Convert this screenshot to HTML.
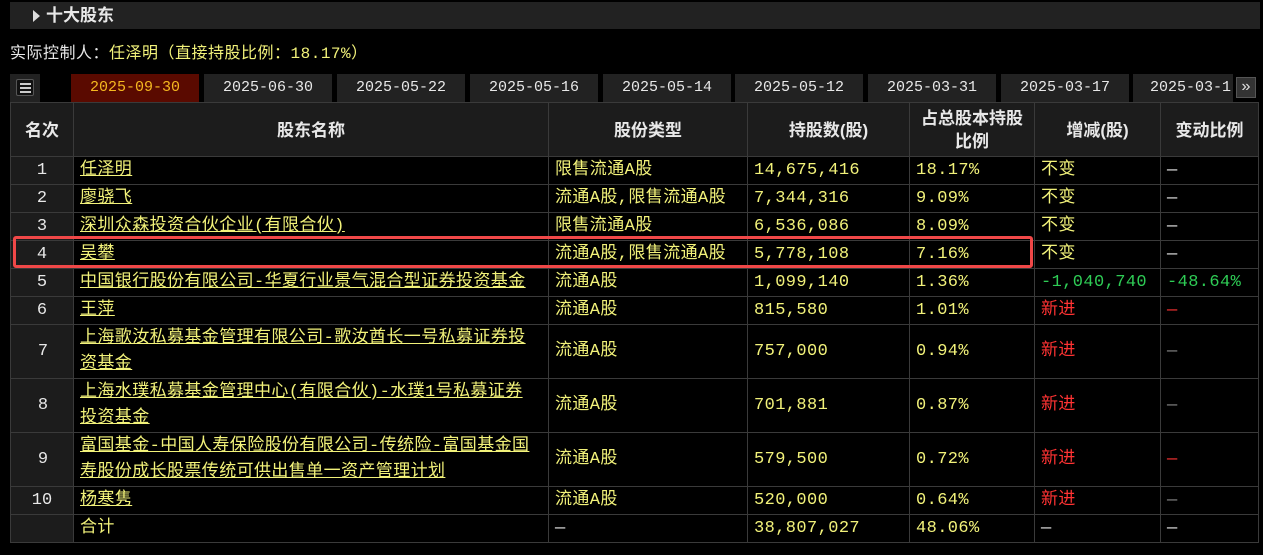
<!DOCTYPE html>
<html><head><meta charset="utf-8"><style>
*{margin:0;padding:0;box-sizing:border-box}
body{width:1263px;height:555px;background:#000;font-family:"Liberation Mono","Noto Sans CJK SC",monospace;font-size:15px;color:#e8e8e8;position:relative;overflow:hidden}
.hdr{position:absolute;left:10px;top:2px;width:1250px;height:27px;background:#222;color:#e8e8e8;font-weight:bold;font-size:17px;line-height:27px;padding-left:36px;font-family:"Liberation Sans","Noto Sans CJK SC",sans-serif}
.hdr:before{content:"";position:absolute;left:23px;top:8px;border-left:7px solid #ddd;border-top:6px solid transparent;border-bottom:6px solid transparent}
.ctl{position:absolute;left:10px;top:43px;font-size:16px;line-height:22px;color:#e8e8e8;letter-spacing:0.5px}
.ctl span{color:#f2f27a}
.ico{position:absolute;left:10px;top:74px;width:30px;height:28px;background:#222}
.ico div{position:absolute;left:6px;top:5px;width:18px;height:17px;border:1px solid #555;border-radius:2px;background:#111}
.ico i{position:absolute;left:3px;width:11px;height:2px;background:#ccc}
.tab{position:absolute;top:74px;height:28px;width:128px;background:#222;color:#e8e8e8;text-align:center;line-height:28px;font-size:15px;overflow:hidden}
.tab.on{background:#5a0a00;color:#f5b820}
.more{position:absolute;left:1236px;top:77px;width:20px;height:21px;background:#333;border:1px solid #555;color:#ddd;font-size:16px;line-height:18px;text-align:center}
table{position:absolute;left:10px;top:102px;border-collapse:collapse;table-layout:fixed}
td,th{border:1px solid #3a3a3a;height:27px;line-height:26px;padding:1px 6px 0;white-space:nowrap;color:#f2f27a;text-align:left;font-size:17px;letter-spacing:0.4px;overflow:hidden}
th{background:#1c1c1c;color:#e8e8e8;font-weight:bold;text-align:center;height:54px;line-height:23px;font-family:"Liberation Sans","Noto Sans CJK SC",sans-serif;font-size:17px;white-space:normal;letter-spacing:0}
td.r{background:#1c1c1c;color:#e8e8e8;text-align:center;letter-spacing:0}
td.n a{color:#f2f27a;text-decoration:underline}
td.d{height:53px;line-height:26px;padding-right:4px}
.w{color:#e8e8e8}.g{color:#2ecc55}.red{color:#ff3333}.gr{color:#888}
.box{position:absolute;left:13px;top:236px;width:1020px;height:32px;border:3px solid #f04848;border-radius:3px}
</style></head><body>
<div class="hdr">十大股东</div>
<div class="ctl">实际控制人：<span>任泽明（直接持股比例：18.17%）</span></div>
<div class="ico"><div><i style="top:3px"></i><i style="top:7px"></i><i style="top:11px"></i></div></div>
<div class="tab on" style="left:71px">2025-09-30</div>
<div class="tab" style="left:204px">2025-06-30</div>
<div class="tab" style="left:337px">2025-05-22</div>
<div class="tab" style="left:470px">2025-05-16</div>
<div class="tab" style="left:603px">2025-05-14</div>
<div class="tab" style="left:735px">2025-05-12</div>
<div class="tab" style="left:868px">2025-03-31</div>
<div class="tab" style="left:1001px">2025-03-17</div>
<div class="tab" style="left:1133px;width:100px;text-align:left;padding-left:17px">2025-03-1</div>
<div class="more">»</div>
<table>
<colgroup><col style="width:63px"><col style="width:475px"><col style="width:199px"><col style="width:162px"><col style="width:125px"><col style="width:126px"><col style="width:98px"></colgroup>
<tr><th>名次</th><th>股东名称</th><th>股份类型</th><th>持股数(股)</th><th>占总股本持股<br>比例</th><th>增减(股)</th><th>变动比例</th></tr>
<tr><td class="r">1</td><td class="n"><a>任泽明</a></td><td>限售流通A股</td><td>14,675,416</td><td>18.17%</td><td>不变</td><td class="w">—</td></tr>
<tr><td class="r">2</td><td class="n"><a>廖骁飞</a></td><td>流通A股,限售流通A股</td><td>7,344,316</td><td>9.09%</td><td>不变</td><td class="w">—</td></tr>
<tr><td class="r">3</td><td class="n"><a>深圳众森投资合伙企业(有限合伙)</a></td><td>限售流通A股</td><td>6,536,086</td><td>8.09%</td><td>不变</td><td class="w">—</td></tr>
<tr><td class="r" style="height:26px">4</td><td class="n"><a>吴攀</a></td><td>流通A股,限售流通A股</td><td>5,778,108</td><td>7.16%</td><td>不变</td><td class="w">—</td></tr>
<tr><td class="r" style="height:28px">5</td><td class="n"><a>中国银行股份有限公司-华夏行业景气混合型证券投资基金</a></td><td>流通A股</td><td>1,099,140</td><td>1.36%</td><td class="g">-1,040,740</td><td class="g">-48.64%</td></tr>
<tr><td class="r" style="height:28px">6</td><td class="n"><a>王萍</a></td><td>流通A股</td><td>815,580</td><td>1.01%</td><td class="red">新进</td><td class="red">—</td></tr>
<tr><td class="r d">7</td><td class="n d"><a>上海歌汝私募基金管理有限公司-歌汝酋长一号私募证券投<br>资基金</a></td><td>流通A股</td><td>757,000</td><td>0.94%</td><td class="red">新进</td><td class="gr">—</td></tr>
<tr><td class="r d">8</td><td class="n d"><a>上海水璞私募基金管理中心(有限合伙)-水璞1号私募证券<br>投资基金</a></td><td>流通A股</td><td>701,881</td><td>0.87%</td><td class="red">新进</td><td class="gr">—</td></tr>
<tr><td class="r d">9</td><td class="n d"><a>富国基金-中国人寿保险股份有限公司-传统险-富国基金国<br>寿股份成长股票传统可供出售单一资产管理计划</a></td><td>流通A股</td><td>579,500</td><td>0.72%</td><td class="red">新进</td><td class="red">—</td></tr>
<tr><td class="r">10</td><td class="n"><a>杨寒隽</a></td><td>流通A股</td><td>520,000</td><td>0.64%</td><td class="red">新进</td><td class="gr">—</td></tr>
<tr><td class="r"></td><td>合计</td><td class="w">—</td><td>38,807,027</td><td>48.06%</td><td class="w">—</td><td class="w">—</td></tr>
</table>
<div class="box"></div>
</body></html>
